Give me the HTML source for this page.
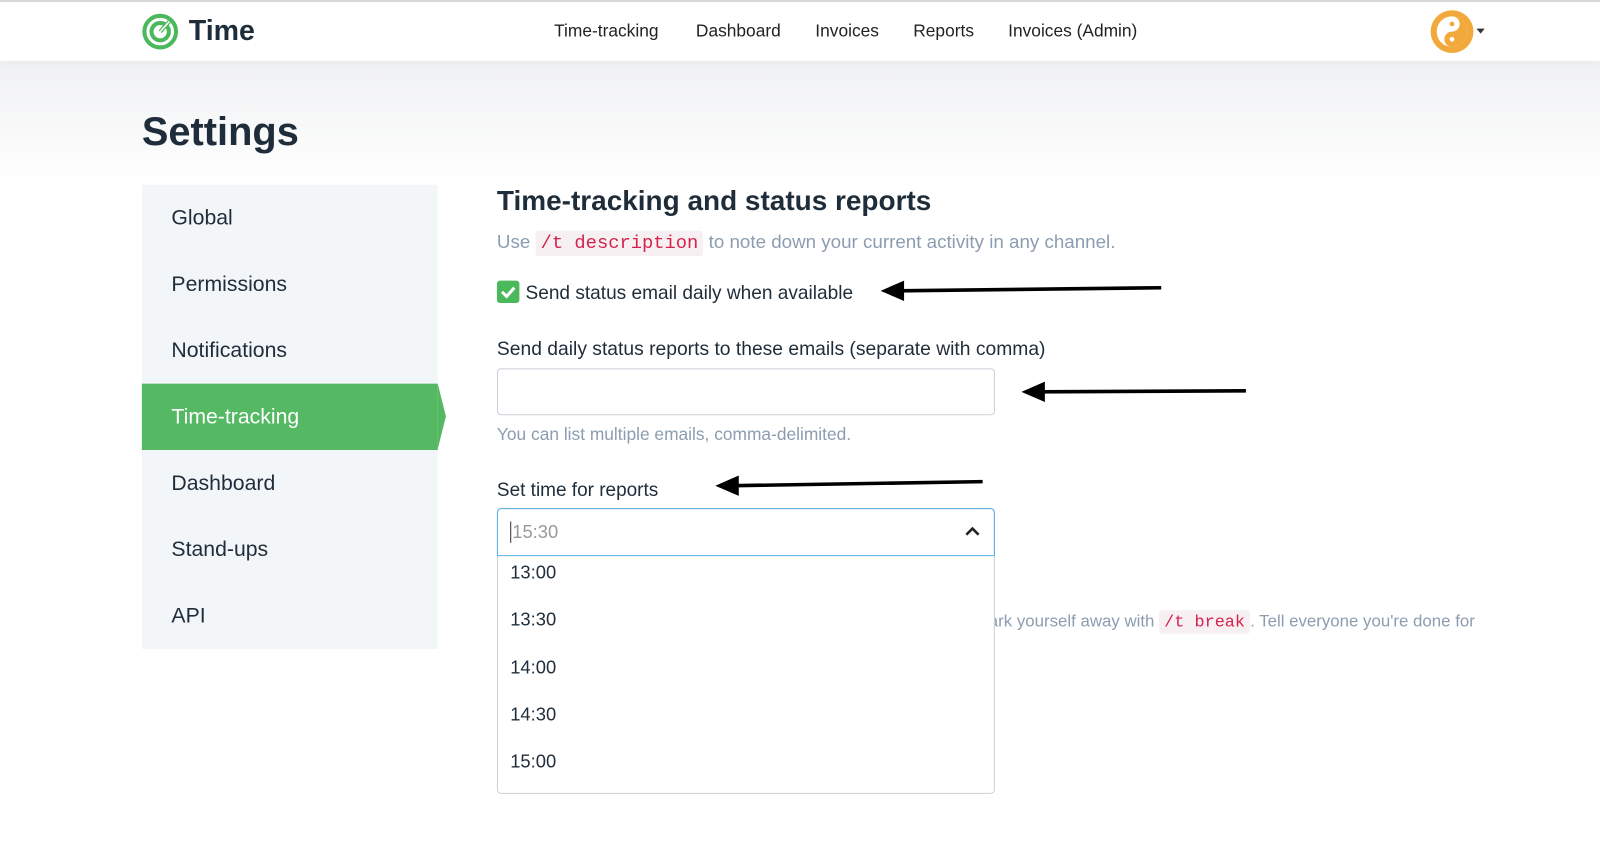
<!DOCTYPE html>
<html><head><style>
*{box-sizing:border-box;margin:0;padding:0}
html,body{width:1600px;height:849px;overflow:hidden}
body{font-family:"Liberation Sans",sans-serif;color:#1f2d3a;background:#fff}
#w{position:absolute;left:0;top:0;width:1568px;height:832px;transform:scale(1.0204);transform-origin:0 0;background:linear-gradient(#f0f1f3 60px,#fff 180px)}
.hdr{position:absolute;left:0;top:0;width:1568px;height:60px;background:#fff;border-top:2px solid #d8d8d8;box-shadow:0 2px 6px rgba(0,0,0,.04)}
.abs{position:absolute}
.nav{position:absolute;top:21px;font-size:17px;color:#222}
.side{position:absolute;left:139px;top:181px;width:290px;height:455px;background:#f3f6f9}
.it{position:absolute;left:168px;font-size:20.8px;color:#1f2d3a}
code{font-family:"Liberation Mono",monospace;color:#d6224d;background:#f6f0f2;padding:2px 5px;border-radius:3px}
.opt{position:absolute;left:500px;font-size:18px;color:#1f2d3a}
</style></head><body><div id="w">
<div class="hdr"></div>
<svg class="abs" style="left:139px;top:13px" width="36" height="36" viewBox="0 0 36 36"><circle cx="18" cy="18" r="15.5" fill="none" stroke="#4cb85c" stroke-width="4"/><circle cx="18" cy="18" r="8.5" fill="none" stroke="#4cb85c" stroke-width="4"/><path d="M18 18 L27 8" stroke="#4cb85c" stroke-width="4"/><path d="M18 18 L27 8" stroke="#fff" stroke-width="1.5"/></svg>
<div class="abs" style="left:185px;top:14px;font-size:28px;font-weight:bold;color:#1f2d3a">Time</div>
<div class="nav" style="left:543px">Time-tracking</div>
<div class="nav" style="left:682px">Dashboard</div>
<div class="nav" style="left:799px">Invoices</div>
<div class="nav" style="left:895px">Reports</div>
<div class="nav" style="left:988px">Invoices (Admin)</div>
<svg class="abs" style="left:1401px;top:9px" width="44" height="44" viewBox="0 0 44 44"><circle cx="22" cy="22" r="21" fill="#f2a93b"/><circle cx="22" cy="22" r="15" fill="#fff"/><path d="M22 7 A15 15 0 0 1 22 37 A7.5 7.5 0 0 1 22 22 A7.5 7.5 0 0 0 22 7Z" fill="#f2a93b"/><circle cx="22" cy="14.5" r="2.3" fill="#f2a93b"/><circle cx="22" cy="29.5" r="2.3" fill="#fff"/></svg>
<div class="abs" style="left:1447px;top:28px;border:4px solid transparent;border-top:5px solid #333"></div>
<div class="abs" style="left:139px;top:108px;font-size:39px;font-weight:bold">Settings</div>
<div class="side"></div>
<div class="abs" style="left:139px;top:376px;width:290px;height:65px;background:#55b862"></div>
<div class="abs" style="left:429px;top:376px;border-left:8px solid #55b862;border-top:32.5px solid transparent;border-bottom:32.5px solid transparent"></div>
<div class="it" style="top:202px">Global</div>
<div class="it" style="top:267px">Permissions</div>
<div class="it" style="top:332px">Notifications</div>
<div class="it" style="top:397px;color:#fff">Time-tracking</div>
<div class="it" style="top:462px">Dashboard</div>
<div class="it" style="top:527px">Stand-ups</div>
<div class="it" style="top:592px">API</div>
<div class="abs" style="left:487px;top:181px;font-size:27.4px;font-weight:bold">Time-tracking and status reports</div>
<div class="abs" style="left:487px;top:226px;font-size:18.4px;color:#8c9db1">Use <code>/t description</code> to note down your current activity in any channel.</div>
<div class="abs" style="left:487px;top:275px;width:22px;height:22px;background:#4cb85c;border-radius:3px"></div>
<svg class="abs" style="left:487px;top:275px" width="22" height="22"><path d="M5 11 L9.5 15.5 L17 7" stroke="#fff" stroke-width="3" fill="none"/></svg>
<div class="abs" style="left:515px;top:276px;font-size:18.7px">Send status email daily when available</div>
<div class="abs" style="left:487px;top:332px;font-size:18.9px">Send daily status reports to these emails (separate with comma)</div>
<div class="abs" style="left:487px;top:361px;width:488px;height:46px;border:1px solid #c9d0d8;border-radius:4px;background:#fff"></div>
<div class="abs" style="left:487px;top:416px;font-size:17px;color:#8c9db1">You can list multiple emails, comma-delimited.</div>
<div class="abs" style="left:487px;top:469px;font-size:18.6px">Set time for reports</div>
<div class="abs" style="left:969px;top:600px;font-size:16.5px;color:#8c9db1">ark yourself away with <code>/t break</code>. Tell everyone you're done for</div>
<div class="abs" style="left:487px;top:498px;width:488px;height:280px;border:1px solid #c9d0d8;background:#fff;border-radius:4px"></div>
<div class="abs" style="left:487px;top:498px;width:488px;height:47px;border:1px solid #5bb0e0;border-radius:4px 4px 0 0"></div>
<div class="abs" style="left:500px;top:511px;font-size:18px;color:#999;border-left:1px solid #333;padding-left:1px">15:30</div>
<svg class="abs" style="left:945px;top:514px" width="16" height="12"><path d="M2 10 L8 4 L14 10" stroke="#222" stroke-width="2.5" fill="none"/></svg>
<div class="opt" style="top:551px">13:00</div>
<div class="opt" style="top:597px">13:30</div>
<div class="opt" style="top:644px">14:00</div>
<div class="opt" style="top:690px">14:30</div>
<div class="opt" style="top:736px">15:00</div>
<svg class="abs" style="left:0;top:0" width="1568" height="832"><g stroke="#000" stroke-width="3.5"><line x1="880" y1="285" x2="1138" y2="282"/><line x1="1018" y1="384" x2="1221" y2="383"/><line x1="718" y1="476" x2="963" y2="472"/></g><g fill="#000"><path d="M863 285 L886 275 L886 295Z"/><path d="M1001 384 L1024 374 L1024 394Z"/><path d="M701 476 L724 466 L724 486Z"/></g></svg>
</div></body></html>
